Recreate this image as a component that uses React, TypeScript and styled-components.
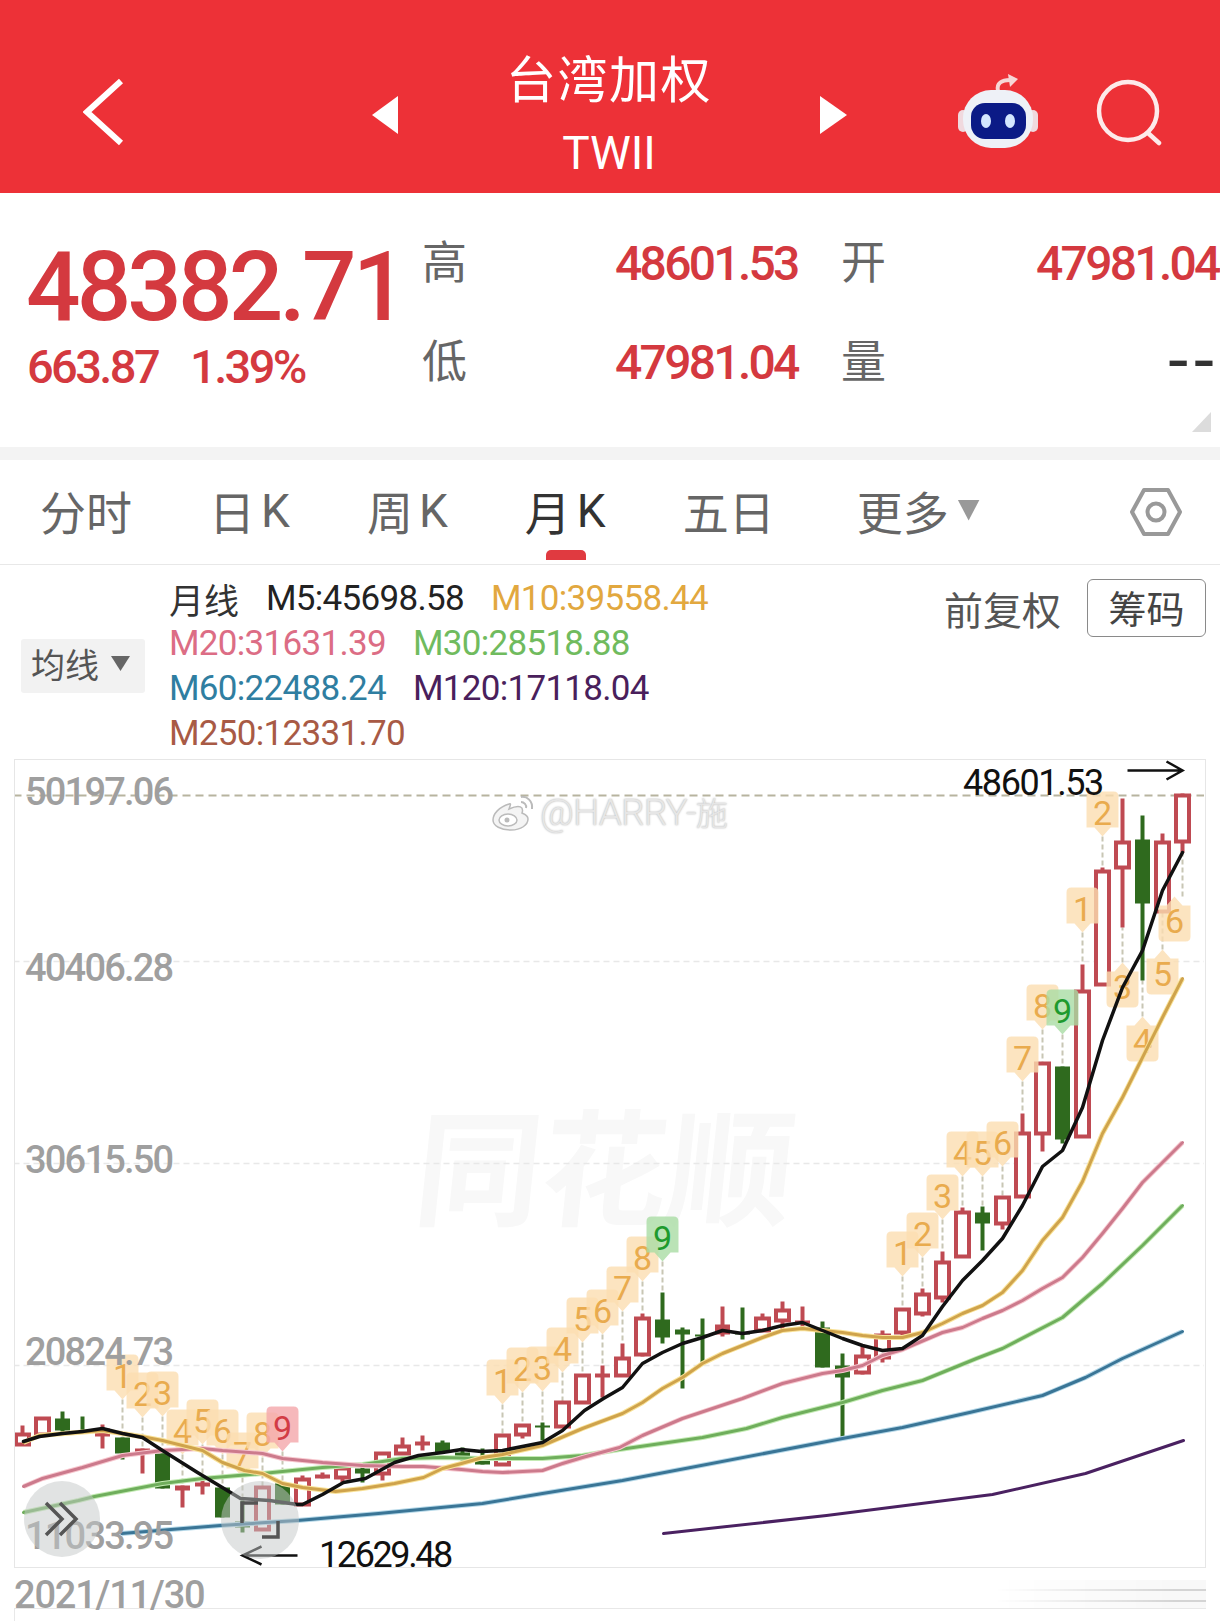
import styled, { createGlobalStyle } from 'styled-components'

const NUM_FONT = `Roboto, "Noto Sans CJK SC", sans-serif`
const CJK_FONT = `"Noto Sans CJK SC", Roboto, sans-serif`
const RED = '#d4393f'

const GlobalStyle = createGlobalStyle`
  html, body {
    margin: 0;
    padding: 0;
    background: #fff;
    overflow-x: hidden;
  }
  * {
    box-sizing: border-box;
  }
`

const Page = styled.div`
  width: 1220px;
  height: 1621px;
  overflow: hidden;
  font-family: ${CJK_FONT};
  background: #fff;
`

const Header = styled.header`
  height: 193px;
  padding-top: 31px;
  background: #ed3137;
  display: grid;
  grid-template-columns: 372px 26px 422px 27px 1fr;
  align-items: center;
`

const BackButton = styled.svg`
  margin-left: 83px;
  display: block;
`

const SwitchArrow = styled.svg`
  margin-top: 6px;
`

const TitleBlock = styled.div`
  display: flex;
  flex-direction: column;
  align-items: center;
  color: #fff;
  margin-top: 3px;
`

const Title = styled.div`
  font-size: 50px;
  line-height: 54px;
  letter-spacing: 1.5px;
  margin-top: -2px;
`

const Code = styled.div`
  font-family: ${NUM_FONT};
  font-size: 46px;
  line-height: 46px;
  margin-top: 27px;
`

const HeaderIcons = styled.div`
  display: flex;
  align-items: center;
  padding-left: 111px;
  gap: 58px;
`

const Quote = styled.section`
  position: relative;
  height: 254px;
  padding-left: 26px;
  display: flex;
  align-items: flex-start;
`

const PriceCol = styled.div`
  width: 396px;
  padding-top: 46px;
  color: ${RED};
  font-family: ${NUM_FONT};
`

const MainPrice = styled.div`
  font-size: 96px;
  line-height: 96px;
  font-weight: 500;
  letter-spacing: -3.9px;
`

const SubPrice = styled.div`
  display: flex;
  gap: 32px;
  margin: 7px 0 0 1px;
  font-size: 47px;
  line-height: 50px;
  font-weight: 500;
  letter-spacing: -2.6px;
`

const DataGrid = styled.div`
  flex: 1;
  margin-top: 21px;
  display: grid;
  grid-template-columns: 193px 226px 195px 1fr;
  grid-auto-rows: 99px;
  align-items: center;
  white-space: nowrap;
`

const DataLabel = styled.div`
  font-size: 45px;
  line-height: 50px;
  margin-top: -8px;
  color: #666;
`

const DataValue = styled.div`
  font-family: ${NUM_FONT};
  font-size: 48px;
  line-height: 50px;
  font-weight: 500;
  letter-spacing: -2.7px;
  color: ${RED};
`

const EmptyValue = styled.div`
  justify-self: end;
  margin-top: -4px;
  font-family: ${NUM_FONT};
  font-size: 72px;
  line-height: 50px;
  letter-spacing: 6px;
  color: #333;
`

const CornerMark = styled.div`
  position: absolute;
  right: 9px;
  bottom: 15px;
  width: 19px;
  height: 20px;
  background: #dcdcdc;
  clip-path: polygon(100% 0, 100% 100%, 0 100%);
`

const Band = styled.div`
  height: 13px;
  background: #f3f3f3;
`

const Tabs = styled.nav`
  height: 105px;
  padding: 0 38px 4px 40px;
  border-bottom: 1px solid #e8e8e8;
  display: flex;
  align-items: center;
  gap: 77px;
`

const Tab = styled.div<{ $active?: boolean }>`
  position: relative;
  display: flex;
  align-items: center;
  height: 60px;
  font-size: 46px;
  color: ${(props) => (props.$active ? '#333' : '#666')};

  ${(props) =>
    props.$active &&
    `
    &::after {
      content: '';
      position: absolute;
      left: 21px;
      bottom: -20px;
      width: 40px;
      height: 10px;
      border-radius: 5px 5px 0 0;
      background: #e03a40;
    }
  `}
`

const MoreTab = styled(Tab)`
  margin-left: 5px;
`

const TabLatin = styled.span`
  font-family: ${NUM_FONT};
  margin: 2px 0 0 6px;
`

const MoreArrow = styled.span`
  width: 22px;
  height: 21px;
  margin-left: 9px;
  background: #999;
  clip-path: polygon(0 0, 100% 0, 50% 100%);
`

const SettingsIcon = styled.svg`
  margin: 4px 0 0 auto;
`

const Legend = styled.section`
  height: 194px;
  padding-left: 21px;
  display: grid;
  grid-template-columns: 148px 1fr auto;
`

const MaButton = styled.div`
  width: 124px;
  height: 54px;
  margin-top: 74px;
  padding: 0 0 5px 10px;
  background: #f2f2f2;
  border-radius: 3px;
  display: flex;
  align-items: center;
  gap: 12px;
  font-size: 34px;
  color: #555;
`

const SmallArrow = styled.span`
  width: 19px;
  height: 15px;
  background: #666;
  clip-path: polygon(0 0, 100% 0, 50% 100%);
`

const LegendRows = styled.div`
  padding-top: 11px;
`

const LegendRow = styled.div`
  display: flex;
  gap: 27px;
  height: 45px;
  line-height: 45px;
  white-space: nowrap;
`

const LegendItem = styled.span<{ $color: string }>`
  font-family: ${NUM_FONT};
  font-size: 35px;
  letter-spacing: -0.7px;
  color: ${(props) => props.$color};
`

const LegendCaption = styled.span`
  font-size: 35px;
  color: #333;
`

const LegendRight = styled.div`
  display: flex;
  align-items: flex-start;
  gap: 26px;
  margin: 14px 14px 0 0;
`

const Adjust = styled.div`
  font-size: 39px;
  line-height: 58px;
  color: #555;
`

const ChipButton = styled.div`
  width: 119px;
  height: 58px;
  border: 1.5px solid #8a8a8a;
  border-radius: 6px;
  text-align: center;
  font-size: 38px;
  line-height: 54px;
  color: #444;
`

const ChartFrame = styled.div`
  position: relative;
  width: 1192px;
  height: 809px;
  margin-left: 14px;
  border: 1.5px solid #e6e6e6;
`

const ChartSvg = styled.svg`
  position: absolute;
  left: 0;
  top: 0;
  z-index: 1;
`

const AxisLabel = styled.span<{ $top: number }>`
  position: absolute;
  z-index: 2;
  left: 10px;
  top: ${(props) => props.$top}px;
  font-family: ${NUM_FONT};
  font-size: 38px;
  line-height: 46px;
  font-weight: 500;
  letter-spacing: -1.8px;
  color: #9f9f9f;
`

const PriceTag = styled.span<{ $top: number; $left: number; $tight?: boolean }>`
  position: absolute;
  z-index: 2;
  left: ${(props) => props.$left}px;
  top: ${(props) => props.$top}px;
  font-family: ${NUM_FONT};
  font-size: 36px;
  line-height: 26px;
  letter-spacing: ${(props) => (props.$tight ? '-2.4px' : '-1.4px')};
  color: #111;
`

const WeiboMark = styled.div`
  position: absolute;
  z-index: 2;
  left: 476px;
  top: 31px;
  display: flex;
  align-items: center;
  gap: 3px;
  font-family: ${NUM_FONT};
  font-size: 37px;
  line-height: 40px;
  font-weight: 300;
  letter-spacing: -0.8px;
  color: #e6e6e6;
  text-shadow: 0 0 2px #a8a8a8;
`

const WeiboHan = styled.span`
  font-family: ${CJK_FONT};
  font-size: 32px;
  letter-spacing: 0;
`

const BrandMark = styled.div`
  position: absolute;
  z-index: 0;
  left: 402px;
  top: 333px;
  font-size: 126px;
  line-height: 136px;
  font-weight: 700;
  color: #f8f8f8;
  transform: skewX(-6deg);
  white-space: nowrap;
`

const FloatButton = styled.div<{ $left: number; $top: number; $size: number }>`
  position: absolute;
  z-index: 3;
  left: ${(props) => props.$left}px;
  top: ${(props) => props.$top}px;
  width: ${(props) => props.$size}px;
  height: ${(props) => props.$size}px;
  border-radius: 50%;
  background: rgba(196, 200, 200, 0.5);
  display: flex;
  align-items: center;
  justify-content: center;
`

const DateRow = styled.div`
  height: 41px;
  margin: 0 14px;
  border-bottom: 1.5px solid #e8e8e8;
  display: flex;
  align-items: center;
  justify-content: space-between;
`

const DateText = styled.span`
  font-family: ${NUM_FONT};
  font-size: 38px;
  line-height: 40px;
  font-weight: 500;
  letter-spacing: -1.2px;
  margin-top: 14px;
  color: #9f9f9f;
`

const SmearBand = styled.div`
  width: 210px;
  height: 28px;
  margin-top: 12px;
  background: repeating-linear-gradient(to bottom, #f8f8f8 0 9px, #d4d4d4 9px 11px);
  mask-image: linear-gradient(to right, transparent, #000 85%);
`

const FooterStub = styled.div`
  height: 13px;
  margin-left: 14px;
  border-left: 1.5px solid #e8e8e8;
`

type Candle = ['h' | 'f' | 'g', number, number, number, number]

// kind, wick top, body top, body bottom, wick bottom
const candles: Candle[] = [
  ['h', 1425, 1434, 1444, 1444], ['h', 1418, 1418, 1434, 1434], ['g', 1411, 1418, 1430, 1432],
  ['g', 1416, 1431, 1433, 1433], ['f', 1424, 1428, 1436, 1448], ['g', 1437, 1437, 1453, 1459],
  ['f', 1448, 1448, 1453, 1473], ['g', 1453, 1453, 1488, 1488], ['f', 1485, 1485, 1490, 1507],
  ['f', 1477, 1482, 1486, 1494], ['g', 1487, 1487, 1517, 1517], ['g', 1500, 1521, 1527, 1532],
  ['h', 1487, 1487, 1529, 1529], ['g', 1483, 1483, 1504, 1504], ['h', 1475, 1479, 1504, 1504],
  ['f', 1472, 1474, 1478, 1478], ['h', 1466, 1468, 1477, 1482], ['g', 1466, 1468, 1473, 1482],
  ['h', 1453, 1453, 1473, 1480], ['h', 1437, 1446, 1453, 1453], ['f', 1435, 1441, 1445, 1450],
  ['g', 1440, 1442, 1452, 1452], ['g', 1447, 1452, 1456, 1460], ['g', 1448, 1460, 1464, 1464],
  ['h', 1435, 1435, 1464, 1464], ['h', 1425, 1425, 1434, 1438], ['g', 1422, 1425, 1427, 1440],
  ['h', 1402, 1402, 1426, 1426], ['h', 1375, 1375, 1402, 1402], ['f', 1365, 1373, 1377, 1397],
  ['h', 1343, 1358, 1375, 1375], ['h', 1313, 1318, 1354, 1356], ['g', 1292, 1319, 1337, 1343],
  ['g', 1327, 1329, 1334, 1388], ['g', 1318, 1334, 1336, 1363], ['f', 1306, 1324, 1334, 1336],
  ['g', 1307, 1332, 1334, 1339], ['h', 1313, 1318, 1330, 1331], ['h', 1301, 1310, 1320, 1330],
  ['f', 1306, 1320, 1323, 1327], ['g', 1321, 1327, 1367, 1367], ['g', 1353, 1365, 1377, 1438],
  ['h', 1346, 1356, 1372, 1374], ['h', 1330, 1335, 1357, 1362], ['h', 1309, 1309, 1332, 1336],
  ['h', 1288, 1294, 1313, 1316], ['h', 1251, 1262, 1297, 1302], ['h', 1207, 1212, 1256, 1257],
  ['g', 1206, 1212, 1223, 1250], ['h', 1197, 1197, 1223, 1229], ['h', 1113, 1133, 1196, 1196],
  ['h', 1062, 1063, 1133, 1151], ['g', 1066, 1066, 1139, 1143], ['h', 964, 991, 1136, 1136],
  ['h', 867, 871, 984, 984], ['h', 798, 842, 867, 927], ['g', 815, 839, 903, 980],
  ['h', 833, 842, 911, 911], ['h', 793, 795, 841, 852],
]

const candleX = (i: number) => 23 + i * 20

type Tag = { x: number; y: number; n: number; to: number; kind?: 'pink' | 'green'; below?: boolean; dx?: number }

const tags: Tag[] = [
  { x: 123, y: 1375, n: 1, to: 1437 }, { x: 143, y: 1393, n: 2, to: 1448 }, { x: 163, y: 1392, n: 3, to: 1453 },
  { x: 183, y: 1430, n: 4, to: 1485 }, { x: 203, y: 1420, n: 5, to: 1477 }, { x: 223, y: 1430, n: 6, to: 1487 },
  { x: 243, y: 1453, n: 7, to: 1500 }, { x: 263, y: 1433, n: 8, to: 1487 },
  { x: 283, y: 1427, n: 9, to: 1483, kind: 'pink' },
  { x: 503, y: 1380, n: 1, to: 1435 }, { x: 523, y: 1368, n: 2, to: 1425 }, { x: 543, y: 1367, n: 3, to: 1422 },
  { x: 563, y: 1348, n: 4, to: 1402 }, { x: 583, y: 1318, n: 5, to: 1375 }, { x: 603, y: 1310, n: 6, to: 1365 },
  { x: 623, y: 1287, n: 7, to: 1343 }, { x: 643, y: 1257, n: 8, to: 1313 },
  { x: 663, y: 1237, n: 9, to: 1292, kind: 'green' },
  { x: 903, y: 1252, n: 1, to: 1309 }, { x: 923, y: 1233, n: 2, to: 1288 }, { x: 943, y: 1195, n: 3, to: 1251 },
  { x: 963, y: 1152, n: 4, to: 1207 }, { x: 983, y: 1152, n: 5, to: 1206 }, { x: 1003, y: 1142, n: 6, to: 1197 },
  { x: 1023, y: 1057, n: 7, to: 1113 }, { x: 1043, y: 1005, n: 8, to: 1062 },
  { x: 1063, y: 1010, n: 9, to: 1066, kind: 'green' },
  { x: 1083, y: 908, n: 1, to: 964 }, { x: 1103, y: 812, n: 2, to: 867 },
  { x: 1123, y: 986, n: 3, to: 927, below: true }, { x: 1143, y: 1040, n: 4, to: 980, below: true },
  { x: 1163, y: 973, n: 5, to: 911, below: true }, { x: 1183, y: 920, n: 6, to: 852, below: true, dx: -8 },
]

const tagStyle = {
  pink: { fill: '#f4a6aa', text: '#d23c45' },
  green: { fill: '#a9dca4', text: '#1e9a2e' },
  amber: { fill: '#fbddb0', text: '#e9ab4e' },
}

// soft tag with cut corners, the point goes towards the candle
const tagPath = (x: number, y: number, below?: boolean) => {
  const s = below ? -1 : 1
  const top = y - 21 * s
  const low = y + 15 * s
  const tip = y + 24 * s
  return `M${x - 11} ${top} L${x + 11} ${top} Q${x + 16} ${top} ${x + 16} ${top + 5 * s} L${x + 16} ${low} L${x + 8} ${low} L${x} ${tip} L${x - 8} ${low} L${x - 16} ${low} L${x - 16} ${top + 5 * s} Q${x - 16} ${top} ${x - 11} ${top} Z`
}

const m5 = '24,1441 40,1436 63,1433 83,1431 103,1428 123,1433 143,1437 163,1450 198,1472 241,1498 270,1500 298,1504 303,1504 323,1494 344,1482 366,1478 395,1462 419,1455 443,1452 462,1449 482,1451 503,1450 543,1442 563,1430 585,1410 604,1398 623,1387 643,1363 663,1352 683,1343 703,1337 723,1330 743,1333 763,1330 783,1325 803,1322 823,1330 843,1338 863,1345 883,1350 903,1348 923,1335 943,1306 963,1280 983,1260 1003,1238 1023,1205 1043,1166 1063,1150 1083,1107 1103,1040 1123,987 1143,950 1163,890 1183,852'
const m10 = '24,1442 40,1435 103,1430 142,1436 163,1440 183,1445 203,1450 223,1462 245,1470 263,1473 283,1483 303,1487 336,1491 363,1488 395,1483 424,1477 443,1468 462,1463 483,1457 503,1454 543,1445 583,1428 623,1413 643,1402 663,1388 683,1377 703,1363 723,1353 743,1345 763,1337 783,1330 803,1328 823,1330 843,1332 863,1335 883,1337 903,1337 923,1332 943,1323 963,1313 983,1305 1003,1292 1023,1270 1043,1240 1063,1217 1083,1181 1103,1133 1123,1097 1143,1057 1163,1017 1183,978'
const m20 = '24,1486 43,1478 83,1467 123,1455 163,1450 203,1448 223,1450 263,1453 283,1458 323,1462 363,1465 403,1466 424,1466 462,1469 483,1471 503,1472 543,1470 563,1463 583,1457 620,1447 643,1435 683,1418 743,1398 783,1383 823,1373 843,1370 863,1365 883,1355 903,1349 943,1332 963,1327 983,1318 1003,1310 1023,1300 1043,1288 1063,1277 1083,1257 1103,1233 1123,1208 1143,1182 1183,1142'
const m30 = '24,1512 79,1500 95,1496 163,1483 203,1478 263,1473 323,1467 363,1464 403,1458 443,1457 483,1458 543,1458 583,1455 620,1449 703,1437 747,1428 783,1417 843,1402 883,1390 923,1380 977,1358 1003,1348 1063,1317 1103,1283 1143,1245 1183,1205'
const m60 = '122,1533 221,1525 298,1520 379,1513 483,1503 543,1493 623,1480 843,1438 903,1427 970,1412 1043,1395 1086,1377 1123,1358 1183,1331'
const m120 = '664,1533 827,1515 993,1494 1086,1473 1184,1440'

const maLines = [
  { points: m120, color: '#4a2161', halo: '', width: 3 },
  { points: m60, color: '#3a7596', halo: '#b5d8e8', width: 3 },
  { points: m30, color: '#6fae5c', halo: '#c4ebb4', width: 3 },
  { points: m20, color: '#cc7a8c', halo: '#f7c8cf', width: 3 },
  { points: m10, color: '#cfa34c', halo: '#f9e39a', width: 3 },
  { points: m5, color: '#111', halo: '', width: 3.5 },
]

const gridLines = [961, 1163, 1365]

const ChartDrawing = () => (
  <ChartSvg width={1189} height={806} viewBox="15.5 759.5 1189 806">
    {gridLines.map((y) => (
      <line key={y} x1={14} x2={1206} y1={y} y2={y} stroke="#e8e8e8" strokeWidth={1.5} strokeDasharray="6 4" />
    ))}
    <line x1={14} x2={1206} y1={795} y2={795} stroke="#b7b49f" strokeWidth={2} strokeDasharray="8 5" />

    {tags.map((t, i) => (
      <line
        key={i}
        x1={t.x}
        x2={t.x}
        y1={t.below ? t.y - 24 : t.y + 24}
        y2={t.to}
        stroke="#c8c6b4"
        strokeWidth={2}
        strokeDasharray="5 3"
      />
    ))}

    {candles.map(([kind, wt, bt, bb, wb], i) => {
      const x = candleX(i)
      const color = kind === 'g' ? '#2f6a1e' : '#bf4a52'
      return (
        <g key={i}>
          <line x1={x} x2={x} y1={wt} y2={wb} stroke={color} strokeWidth={4} />
          {kind === 'h' ? (
            <rect x={x - 6.5} y={bt} width={13} height={bb - bt} fill="#fff" stroke={color} strokeWidth={4} />
          ) : (
            <rect x={x - 7.5} y={bt} width={15} height={Math.max(bb - bt, 2)} fill={color} />
          )}
        </g>
      )
    })}

    {tags.map((t, i) => {
      const tone = tagStyle[t.kind ?? 'amber']
      const cx = t.x + (t.dx ?? 0)
      return (
        <g key={i}>
          <path d={tagPath(cx, t.y, t.below)} fill={tone.fill} fillOpacity={0.8} />
          <text x={cx} y={t.y + 12} textAnchor="middle" fontFamily="Roboto, sans-serif" fontSize={34} fill={tone.text}>
            {t.n}
          </text>
        </g>
      )
    })}

    {maLines.map((l) => (
      <g key={l.color}>
        {l.halo && (
          <polyline points={l.points} fill="none" stroke={l.halo} strokeWidth={l.width + 2} strokeLinejoin="round" />
        )}
        <polyline
          points={l.points}
          fill="none"
          stroke={l.color}
          strokeWidth={l.width}
          strokeLinejoin="round"
          strokeLinecap="round"
        />
      </g>
    ))}

    <path d="M1128 770 L1183 770 M1167 761 L1183 770 L1167 779" fill="none" stroke="#111" strokeWidth={2.5} />
    <path d="M298 1555 L243 1555 M262 1546 L243 1555 L262 1564" fill="none" stroke="#111" strokeWidth={2.5} />
  </ChartSvg>
)

const axisLabels = [
  { text: '50197.06', top: 9 },
  { text: '40406.28', top: 185 },
  { text: '30615.50', top: 377 },
  { text: '20824.73', top: 569 },
  { text: '11033.95', top: 753 },
]

const App = () => (
  <Page>
    <GlobalStyle />
    <Header>
      <BackButton width={122} height={68} viewBox="0 0 122 68">
        <path d="M38 3 L4 34 L38 65" fill="none" stroke="#fff" strokeWidth={6} />
      </BackButton>
      <SwitchArrow width={26} height={38} viewBox="0 0 26 38">
        <path d="M26 0 L26 38 L0 19 Z" fill="#fff" />
      </SwitchArrow>
      <TitleBlock>
        <Title>台湾加权</Title>
        <Code>TWII</Code>
      </TitleBlock>
      <SwitchArrow width={27} height={38} viewBox="0 0 27 38">
        <path d="M0 0 L27 19 L0 38 Z" fill="#fff" />
      </SwitchArrow>
      <HeaderIcons>
        <svg width={80} height={76} viewBox="0 0 80 76">
          <path d="M40 17 C38 9 44 6 52 6" fill="none" stroke="#f6d6d6" strokeWidth={4} />
          <path d="M50 0 L60 5 L52 13 Z" fill="#f6d6d6" />
          <rect x={0} y={36} width={10} height={22} rx={5} fill="#f0d9de" />
          <rect x={70} y={36} width={10} height={22} rx={5} fill="#f0d9de" />
          <rect x={5} y={16} width={70} height={58} rx={28} fill="#eef1f7" />
          <rect x={13} y={29} width={55} height={36} rx={14} fill="#0b1a86" />
          <ellipse cx={28} cy={47} rx={5} ry={7} fill="#d4e6ff" />
          <ellipse cx={52} cy={47} rx={5} ry={7} fill="#d4e6ff" />
        </svg>
        <svg width={66} height={68} viewBox="0 0 66 68">
          <circle cx={32} cy={33} r={29} fill="none" stroke="#fdeaea" strokeWidth={4.5} />
          <path d="M52 55 L63 65" stroke="#fdeaea" strokeWidth={4.5} strokeLinecap="round" />
        </svg>
      </HeaderIcons>
    </Header>

    <Quote>
      <PriceCol>
        <MainPrice>48382.71</MainPrice>
        <SubPrice>
          <span>663.87</span>
          <span>1.39%</span>
        </SubPrice>
      </PriceCol>
      <DataGrid>
        <DataLabel>高</DataLabel>
        <DataValue>48601.53</DataValue>
        <DataLabel>开</DataLabel>
        <DataValue>47981.04</DataValue>
        <DataLabel>低</DataLabel>
        <DataValue>47981.04</DataValue>
        <DataLabel>量</DataLabel>
        <EmptyValue>--</EmptyValue>
      </DataGrid>
      <CornerMark />
    </Quote>
    <Band />

    <Tabs>
      <Tab>分时</Tab>
      <Tab>
        日<TabLatin>K</TabLatin>
      </Tab>
      <Tab>
        周<TabLatin>K</TabLatin>
      </Tab>
      <Tab $active>
        月<TabLatin>K</TabLatin>
      </Tab>
      <Tab>五日</Tab>
      <MoreTab>
        更多
        <MoreArrow />
      </MoreTab>
      <SettingsIcon width={52} height={50} viewBox="0 0 52 50">
        <path d="M2 25 L14 3 L38 3 L50 25 L38 47 L14 47 Z" fill="none" stroke="#999" strokeWidth={4} strokeLinejoin="round" />
        <circle cx={26} cy={25} r={8.5} fill="none" stroke="#999" strokeWidth={4} />
      </SettingsIcon>
    </Tabs>

    <Legend>
      <MaButton>
        均线
        <SmallArrow />
      </MaButton>
      <LegendRows>
        <LegendRow>
          <LegendCaption>月线</LegendCaption>
          <LegendItem $color="#222">M5:45698.58</LegendItem>
          <LegendItem $color="#e2a83f">M10:39558.44</LegendItem>
        </LegendRow>
        <LegendRow>
          <LegendItem $color="#dc6d85">M20:31631.39</LegendItem>
          <LegendItem $color="#70bb5e">M30:28518.88</LegendItem>
        </LegendRow>
        <LegendRow>
          <LegendItem $color="#2f7ea1">M60:22488.24</LegendItem>
          <LegendItem $color="#4a1f5c">M120:17118.04</LegendItem>
        </LegendRow>
        <LegendRow>
          <LegendItem $color="#a85a45">M250:12331.70</LegendItem>
        </LegendRow>
      </LegendRows>
      <LegendRight>
        <Adjust>前复权</Adjust>
        <ChipButton>筹码</ChipButton>
      </LegendRight>
    </Legend>

    <ChartFrame>
      <BrandMark>同花顺</BrandMark>
      <ChartDrawing />
      {axisLabels.map((l) => (
        <AxisLabel key={l.text} $top={l.top}>
          {l.text}
        </AxisLabel>
      ))}
      <PriceTag $left={948} $top={10}>48601.53</PriceTag>
      <PriceTag $left={304} $top={782} $tight>12629.48</PriceTag>
      <WeiboMark>
        <svg width={46} height={40} viewBox="0 0 46 40">
          <path
            d="M18 12 C8 15 2 22 2 28 C2 34 10 38 20 38 C30 38 37 33 37 27 C37 23 33 22 31 21 C33 15 29 12 18 17 C20 12 20 11 18 12 Z"
            fill="#f4f4f4"
            stroke="#bbb"
            strokeWidth={1.5}
          />
          <ellipse cx={17} cy={28} rx={9} ry={6} fill="#fff" stroke="#bbb" strokeWidth={1.5} />
          <circle cx={16} cy={28} r={2.5} fill="#bbb" />
          <path d="M30 5 C36 4 42 9 41 17 M30 10 C33 10 36 13 35 16" fill="none" stroke="#bbb" strokeWidth={2} />
        </svg>
        <span>
          @HARRY-<WeiboHan>施</WeiboHan>
        </span>
      </WeiboMark>
      <FloatButton $left={9} $top={721} $size={76}>
        <svg width={40} height={40} viewBox="0 0 40 40">
          <path d="M4 4 L20 20 L4 36 M18 4 L34 20 L18 36" fill="none" stroke="#555" strokeWidth={3.5} />
        </svg>
      </FloatButton>
      <FloatButton $left={206} $top={721} $size={78}>
        <svg width={42} height={42} viewBox="0 0 42 42">
          <path d="M19 4 L3 4 L3 24 M23 38 L39 38 L39 22" fill="none" stroke="#555" strokeWidth={3.5} />
        </svg>
      </FloatButton>
    </ChartFrame>

    <DateRow>
      <DateText>2021/11/30</DateText>
      <SmearBand />
    </DateRow>
    <FooterStub />
  </Page>
)

export default App
